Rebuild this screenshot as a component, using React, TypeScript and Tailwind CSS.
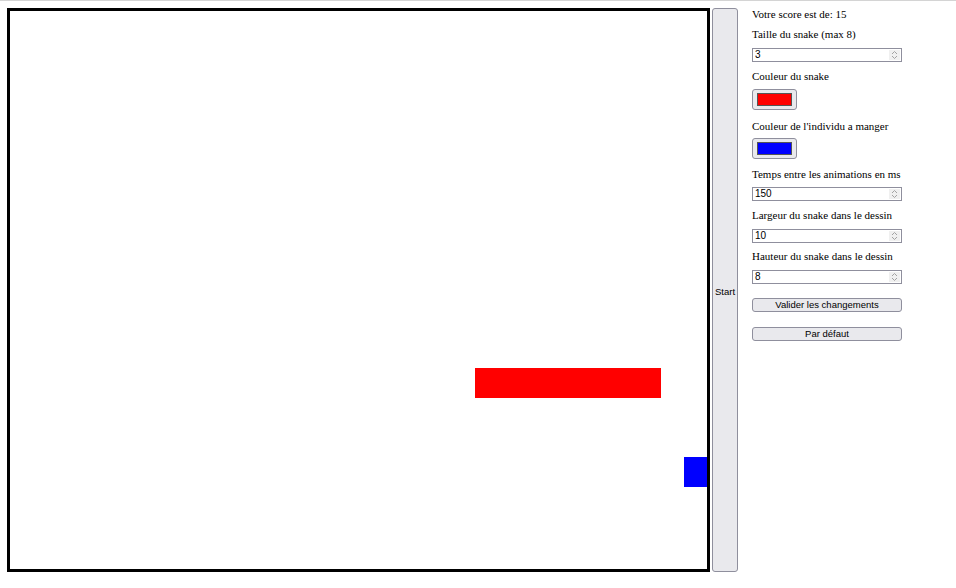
import React from 'react'

const serif = { fontFamily: '"Liberation Serif", "Times New Roman", serif' }
const sans = { fontFamily: '"Liberation Sans", Arial, sans-serif' }

function Label({ text, className = '' }: { text: string; className?: string }) {
  return (
    <div className={`text-[11px] leading-[13px] text-black whitespace-nowrap ${className}`} style={serif}>
      {text}
    </div>
  )
}

function NumberField({ value, className = '' }: { value: string; className?: string }) {
  return (
    <div
      className={`flex h-[14px] w-[150px] items-stretch border border-[#8f8f9d] bg-white ${className}`}
      style={sans}
    >
      <span className="flex-1 pl-[2px] text-[10px] leading-[12px] text-black">{value}</span>
      <span className="m-[1px] flex w-[11px] flex-col items-center justify-center bg-[#f0f0f0]">
        <svg width="7" height="10" viewBox="0 0 7 10" fill="none" stroke="#9a9a9a" strokeWidth="0.9">
          <path d="M1 4 L3.5 1.5 L6 4" />
          <path d="M1 6 L3.5 8.5 L6 6" />
        </svg>
      </span>
    </div>
  )
}

function ColorField({ color, className = '' }: { color: string; className?: string }) {
  return (
    <div
      className={`flex h-[21px] w-[45px] items-center justify-center rounded-[3px] border border-[#8f8f9d] bg-[#e9e9ed] ${className}`}
    >
      <div className="h-[13px] w-[35px] border border-[#555]" style={{ backgroundColor: color }} />
    </div>
  )
}

function FormButton({ text, className = '' }: { text: string; className?: string }) {
  return (
    <button
      className={`h-[14px] w-[150px] rounded-[3px] border border-[#8f8f9d] bg-[#e9e9ed] text-[9.5px] leading-[12px] text-black ${className}`}
      style={sans}
    >
      {text}
    </button>
  )
}

export default function App() {
  return (
    <div className="min-h-[588px] w-[956px] border-t border-[#d4d4d4] bg-white">
      <div className="flex pl-[7px] pt-[7px]">
        <div className="relative h-[564px] w-[703px] overflow-hidden border-[3px] border-black bg-white">
          <div className="absolute left-[465px] top-[357px] h-[30px] w-[186px] bg-[#ff0000]" />
          <div className="absolute left-[674px] top-[446px] h-[30px] w-[30px] bg-[#0000ff]" />
        </div>
        <button
          className="ml-[2px] h-[564px] w-[26px] rounded-[3px] border border-[#8f8f9d] bg-[#e9e9ed] pt-[4px] text-[9.5px] text-black"
          style={sans}
        >
          Start
        </button>
        <div className="ml-[14px] flex flex-col">
          <Label text="Votre score est de: 15" />
          <Label text="Taille du snake (max 8)" className="mt-[7px]" />
          <NumberField value="3" className="mt-[7px]" />
          <Label text="Couleur du snake" className="mt-[8px]" />
          <ColorField color="#ff0000" className="mt-[6px]" />
          <Label text="Couleur de l'individu a manger" className="mt-[10px]" />
          <ColorField color="#0000ff" className="mt-[5px]" />
          <Label text="Temps entre les animations en ms" className="mt-[9px]" />
          <NumberField value="150" className="mt-[6px]" />
          <Label text="Largeur du snake dans le dessin" className="mt-[8px]" />
          <NumberField value="10" className="mt-[7px]" />
          <Label text="Hauteur du snake dans le dessin" className="mt-[7px]" />
          <NumberField value="8" className="mt-[7px]" />
          <FormButton text="Valider les changements" className="mt-[14px]" />
          <FormButton text="Par défaut" className="mt-[15px]" />
        </div>
      </div>
    </div>
  )
}
